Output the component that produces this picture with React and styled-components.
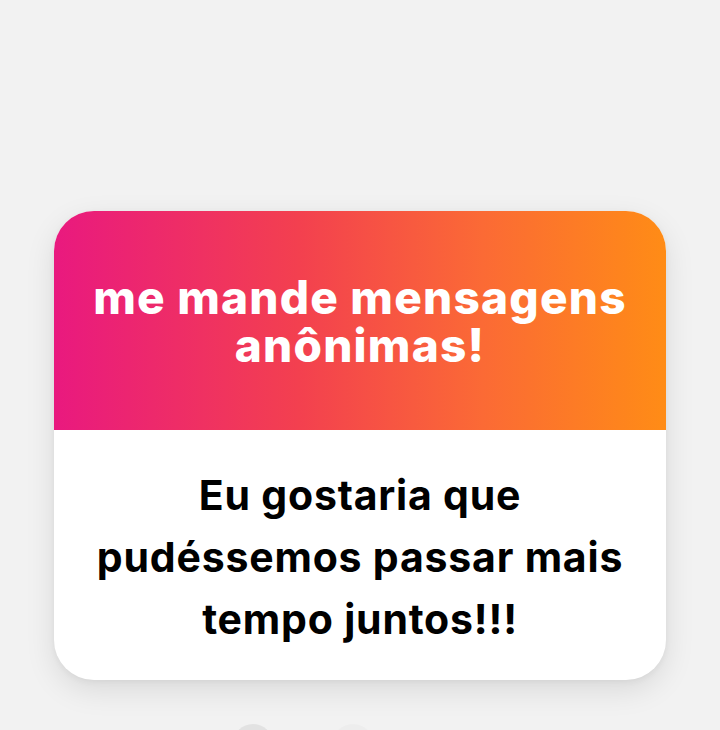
import React from "react";
import styled, { createGlobalStyle } from "styled-components";

const GlobalStyle = createGlobalStyle`
  html, body {
    margin: 0;
    padding: 0;
    background: #f2f2f2;
    overflow: hidden;
  }
`;

const App = () => {
  return (
    <Page>
      <GlobalStyle />
      <Card>
        <Header>
          <Title>
            me mande mensagens
            <br />
            anônimas!
          </Title>
        </Header>
        <Body>
          <Message>
            Eu gostaria que
            <br />
            pudéssemos passar mais
            <br />
            tempo juntos!!!
          </Message>
        </Body>
      </Card>
      <Dots>
        <Dot tone="#e2e2e2" />
        <Dot tone="#ededed" />
      </Dots>
    </Page>
  );
};

const Page = styled.div`
  height: 730px;
  box-sizing: border-box;
  padding-top: 211px;
  display: flex;
  flex-direction: column;
  align-items: center;
  font-family: Inter, "Liberation Sans", sans-serif;
`;

const Card = styled.div`
  flex-shrink: 0;
  width: 612px;
  border-radius: 40px;
  overflow: hidden;
  background: #fff;
  box-shadow: 0 10px 30px rgba(0, 0, 0, 0.1), 0 2px 6px rgba(0, 0, 0, 0.05);
`;

const Header = styled.div`
  height: 219px;
  display: flex;
  align-items: center;
  justify-content: center;
  background: linear-gradient(90deg, #e9197f 0%, #f3404f 40%, #fb6a35 70%, #ff8c16 100%);
`;

const Title = styled.h1`
  margin: 0;
  text-align: center;
  color: #fff;
  font-size: 46px;
  line-height: 48px;
  font-weight: 800;
  letter-spacing: 1.2px;
`;

const Body = styled.div`
  height: 250px;
  display: flex;
  align-items: center;
  justify-content: center;
`;

const Message = styled.p`
  margin: 0;
  padding-top: 4px;
  text-align: center;
  color: #000;
  font-size: 41px;
  line-height: 62px;
  font-weight: 700;
  letter-spacing: 0.8px;
`;

const Dots = styled.div`
  flex-shrink: 0;
  margin-top: 44px;
  display: flex;
  gap: 60px;
  margin-right: 114px;
`;

const Dot = styled.div`
  width: 40px;
  height: 40px;
  border-radius: 50%;
  background: ${(p) => p.tone};
`;

export default App;
